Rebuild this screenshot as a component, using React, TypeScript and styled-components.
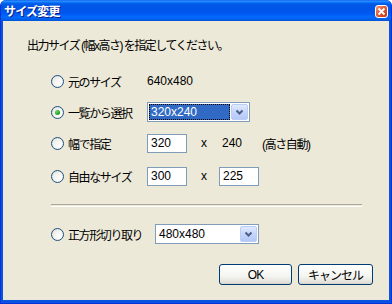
import styled, { createGlobalStyle } from 'styled-components';

const GlobalStyle = createGlobalStyle`
  html, body {
    margin: 0;
    padding: 0;
    background: #ffffff;
  }
  body {
    font-family: 'Liberation Sans', 'Noto Sans CJK JP', sans-serif;
    font-size: 12px;
  }
`;

const Window = styled.div`
  width: 392px;
  height: 304px;
  display: flex;
  flex-direction: column;
  box-sizing: border-box;
  background: #0854e0;
  border: 1px solid #0831d9;
  border-top: none;
  border-radius: 6px 6px 0 0;
  overflow: hidden;
`;

const TitleBar = styled.div`
  height: 21px;
  flex: none;
  display: flex;
  align-items: center;
  justify-content: space-between;
  padding: 0 3px 0 3px;
  background: linear-gradient(
    to bottom,
    #0058ee 0%,
    #3593ff 5%,
    #127dff 10%,
    #0262ee 16%,
    #0057e5 24%,
    #0055eb 56%,
    #005bf5 68%,
    #026afe 80%,
    #0062ef 90%,
    #0052d6 100%
  );
`;

const Title = styled.span`
  color: #ffffff;
  font-family: 'Noto Sans CJK JP', sans-serif;
  font-weight: 700;
  font-size: 12px;
  letter-spacing: -0.8px;
  text-shadow: 1px 1px 0 #0a1e8a;
  line-height: 14px;
`;

const CloseButton = styled.div`
  width: 11px;
  height: 11px;
  margin-top: 1px;
  border: 1px solid #ffffff;
  border-radius: 3px;
  background: linear-gradient(135deg, #f09a7a 0%, #e25a34 45%, #c2391b 100%);
  display: flex;
  align-items: center;
  justify-content: center;
`;

const Client = styled.div`
  flex: 1;
  margin: 0 2px 3px 2px;
  background: #ece9d8;
  padding: 18px 16px 0 24px;
  color: #000000;
`;

const Instruction = styled.div`
  line-height: 14px;
  height: 14px;
  letter-spacing: -1.5px;
`;

const Options = styled.div`
  margin: 18px 0 0 24px;
  display: flex;
  flex-direction: column;
`;

const Row = styled.div<{ $gap?: number }>`
  height: 20px;
  display: flex;
  align-items: center;
  margin-bottom: ${p => p.$gap ?? 11}px;
`;

const RadioLabel = styled.label<{ $w: number }>`
  width: ${p => p.$w}px;
  flex: none;
  display: flex;
  align-items: center;
  gap: 3px;
  font-family: 'Noto Sans CJK JP', sans-serif;
  letter-spacing: -1.4px;
  white-space: nowrap;
`;

const Radio = styled.span<{ $checked?: boolean }>`
  width: 11px;
  height: 11px;
  flex: none;
  margin-right: 1px;
  border: 1px solid #1c5180;
  border-radius: 50%;
  background: radial-gradient(circle at 65% 65%, #ffffff 0%, #f2f2ee 50%, #d9d8ce 100%);
  display: flex;
  align-items: center;
  justify-content: center;

  &::after {
    content: '';
    display: ${p => (p.$checked ? 'block' : 'none')};
    width: 5px;
    height: 5px;
    border-radius: 50%;
    background: radial-gradient(circle at 35% 35%, #6fd56f 0%, #21a121 60%, #1a8a1a 100%);
  }
`;

const Value = styled.span<{ $ml?: number; $cjk?: boolean }>`
  margin-left: ${p => p.$ml ?? 0}px;
  letter-spacing: ${p => (p.$cjk ? '-1.4px' : 'normal')};
  white-space: nowrap;
`;

const TextBox = styled.div<{ $w: number; $ml?: number }>`
  width: ${p => p.$w}px;
  height: 19px;
  margin-left: ${p => p.$ml ?? 0}px;
  box-sizing: border-box;
  border: 1px solid #7f9db9;
  background: #ffffff;
  padding: 0 3px;
  line-height: 17px;
  flex: none;
`;

const Combo = styled.div<{ $w: number }>`
  width: ${p => p.$w}px;
  height: 20px;
  box-sizing: border-box;
  border: 1px solid #7f9db9;
  background: #ffffff;
  display: flex;
  align-items: stretch;
  padding: 1px;
  flex: none;
`;

const ComboText = styled.div<{ $selected?: boolean }>`
  flex: 1;
  line-height: 16px;
  padding: 0 2px;
  color: ${p => (p.$selected ? '#ffffff' : '#000000')};
  background: ${p => (p.$selected ? '#316ac5' : 'transparent')};
  outline: ${p => (p.$selected ? '1px dotted #000000' : 'none')};
  outline-offset: -1px;
  margin-right: 1px;
`;

const DropButton = styled.div`
  width: 15px;
  flex: none;
  border: 1px solid #b9cdf7;
  border-radius: 2px;
  background: linear-gradient(to bottom, #e1eafe 0%, #c5d5fc 50%, #b4c8f6 100%);
  display: flex;
  align-items: center;
  justify-content: center;
`;

const Separator = styled.div`
  height: 1px;
  margin: 18px 11px 0 0;
  border-top: 1px solid #aca899;
  border-bottom: 1px solid #ffffff;
`;

const Buttons = styled.div`
  margin-top: 20px;
  display: flex;
  justify-content: flex-end;
  gap: 6px;
`;

const Button = styled.button<{ $w: number }>`
  width: ${p => p.$w}px;
  height: 21px;
  box-sizing: border-box;
  border: 1px solid #003c74;
  border-radius: 3px;
  background: linear-gradient(to bottom, #ffffff 0%, #f4f4f0 60%, #e3e2da 90%, #d6d0c5 100%);
  font-family: 'Liberation Sans', 'Noto Sans CJK JP', sans-serif;
  font-size: 12px;
  color: #000000;
  padding: 0;
  letter-spacing: -1px;
`;

function Chevron() {
  return (
    <svg width="9" height="7" viewBox="0 0 9 7">
      <path d="M1.5 1.5 L4.5 4.5 L7.5 1.5" fill="none" stroke="#4d6185" strokeWidth="2" />
    </svg>
  );
}

export default function App() {
  return (
    <>
      <GlobalStyle />
      <Window>
        <TitleBar>
          <Title>サイズ変更</Title>
          <CloseButton>
            <svg width="9" height="9" viewBox="0 0 9 9">
              <path d="M1.5 1.5 L7.5 7.5 M7.5 1.5 L1.5 7.5" stroke="#ffffff" strokeWidth="1.8" />
            </svg>
          </CloseButton>
        </TitleBar>
        <Client>
          <Instruction>出力サイズ (幅x高さ) を指定してください。</Instruction>
          <Options>
            <Row>
              <RadioLabel $w={96}><Radio />元のサイズ</RadioLabel>
              <Value>640x480</Value>
            </Row>
            <Row>
              <RadioLabel $w={96}><Radio $checked />一覧から選択</RadioLabel>
              <Combo $w={103}>
                <ComboText $selected>320x240</ComboText>
                <DropButton><Chevron /></DropButton>
              </Combo>
            </Row>
            <Row $gap={13}>
              <RadioLabel $w={96}><Radio />幅で指定</RadioLabel>
              <TextBox $w={40}>320</TextBox>
              <Value $ml={14}>x</Value>
              <Value $ml={15}>240</Value>
              <Value $ml={20} $cjk>(高さ自動)</Value>
            </Row>
            <Row $gap={0}>
              <RadioLabel $w={96}><Radio />自由なサイズ</RadioLabel>
              <TextBox $w={40}>300</TextBox>
              <Value $ml={14}>x</Value>
              <TextBox $w={40} $ml={12}>225</TextBox>
            </Row>
            <Separator />
            <Row $gap={0} style={{ marginTop: 17 }}>
              <RadioLabel $w={104}><Radio />正方形切り取り</RadioLabel>
              <Combo $w={104}>
                <ComboText>480x480</ComboText>
                <DropButton><Chevron /></DropButton>
              </Combo>
            </Row>
          </Options>
          <Buttons>
            <Button $w={73}>OK</Button>
            <Button $w={75}>キャンセル</Button>
          </Buttons>
        </Client>
      </Window>
    </>
  );
}
